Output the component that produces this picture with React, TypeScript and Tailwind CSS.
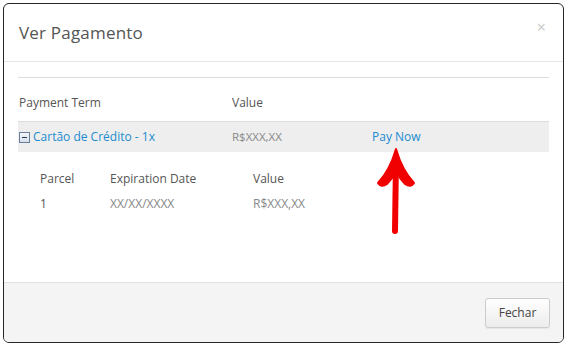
export default function App() {
  const font = { fontFamily: '"Open Sans", "Noto Sans", Arial, sans-serif' };

  return (
    <div className="h-[346px] w-[567px] bg-white p-[3px]" style={font}>
      <div className="relative flex h-full flex-col overflow-hidden rounded-[6px] border-[1.5px] border-[#262626] bg-white">
        <header className="flex h-[58px] shrink-0 items-center justify-between border-b border-[#e5e5e5] pl-[15px] pr-[17px]">
          <h4 className="text-[17px] tracking-[0.2px] text-[#555]">Ver Pagamento</h4>
          <span className="-mt-[12px] text-[16px] leading-none text-[#c8c8c8]">×</span>
        </header>

        <div className="flex-1 px-[14px] pt-[15px]">
          <div className="h-px bg-[#dcdcdc]" />

          <div className="flex h-[43px] items-end pb-[9px] pl-px text-[12px] text-[#555]">
            <span className="w-[213px]">Payment Term</span>
            <span>Value</span>
          </div>

          <div className="flex h-[31px] items-center border-t border-[#dcdcdc] bg-[#eeeeee] text-[12px]">
            <span className="flex w-[214px] items-center text-[#1c8bcf]">
              <span className="ml-px mr-[3px] flex h-[11px] w-[11px] items-center justify-center border border-[#6a7f9c] bg-gradient-to-b from-[#f4f7fb] to-[#d5dfec]">
                <span className="h-px w-[5px] bg-[#2b3a55]" />
              </span>
              Cartão de Crédito - 1x
            </span>
            <span className="w-[140px] text-[11.5px] text-[#888]">R$XXX,XX</span>
            <span className="text-[#1c8bcf]">Pay Now</span>
          </div>

          <div className="pl-[22px] pt-[14px] text-[12px] text-[#555]">
            <div className="flex h-[25px] items-center">
              <span className="w-[70px]">Parcel</span>
              <span className="w-[143px]">Expiration Date</span>
              <span>Value</span>
            </div>
            <div className="flex h-[25px] items-center">
              <span className="w-[70px]">1</span>
              <span className="w-[143px] text-[12px] text-[#888]">XX/XX/XXXX</span>
              <span className="text-[12px] text-[#888]">R$XXX,XX</span>
            </div>
          </div>
        </div>

        <footer className="flex h-[60px] shrink-0 items-center justify-end border-t border-[#e2e2e2] bg-[#f4f4f4] pr-[13px]">
          <button className="h-[30px] w-[65px] rounded-[3px] border border-[#cccccc] bg-gradient-to-b from-white to-[#ececec] text-[12px] text-[#444] shadow-[0_1px_1px_rgba(0,0,0,0.06)]">
            Fechar
          </button>
        </footer>

        <svg
          className="pointer-events-none absolute left-[-4.5px] top-[-4.5px]"
          width="567"
          height="346"
          viewBox="0 0 567 346"
        >
          <path
            d="M396 158 L395 231"
            stroke="#f00000"
            strokeWidth="6"
            strokeLinecap="round"
            fill="none"
          />
          <path
            d="M396 149 Q390 170 378 183 Q381 188 387 184 Q392 179 396 171 Q400 179 405 184 Q411 188 414 183 Q402 170 396 149 Z"
            fill="#f00000"
            stroke="#f00000"
            strokeWidth="2"
            strokeLinejoin="round"
          />
        </svg>
      </div>
    </div>
  );
}
